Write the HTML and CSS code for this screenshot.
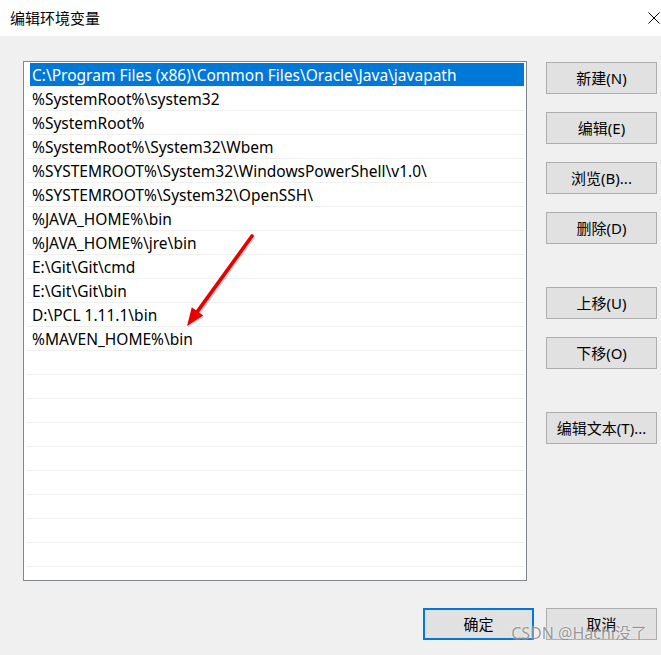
FILE: index.html
```html
<!DOCTYPE html>
<html lang="zh-CN">
<head>
  <meta charset="UTF-8" />
  <title>编辑环境变量</title>
  <link rel="stylesheet" href="styles.css">
</head>
<body>

  <div class="titlebar">
    <span class="title">编辑环境变量</span>
    <svg class="close" width="12" height="12" viewBox="0 0 12 12">
      <path d="M0.5 0.5 L11.5 11.5 M11.5 0.5 L0.5 11.5" stroke="#000" stroke-width="1" fill="none"/>
    </svg>
  </div>

  <div class="dialog">
    <div class="main">
      <div class="listbox">
        <div class="row sel"><span class="cell">C:\Program Files (x86)\Common Files\Oracle\Java\javapath</span></div>
        <div class="row"><span class="cell">%SystemRoot%\system32</span></div>
        <div class="row"><span class="cell">%SystemRoot%</span></div>
        <div class="row"><span class="cell">%SystemRoot%\System32\Wbem</span></div>
        <div class="row"><span class="cell">%SYSTEMROOT%\System32\WindowsPowerShell\v1.0\</span></div>
        <div class="row"><span class="cell">%SYSTEMROOT%\System32\OpenSSH\</span></div>
        <div class="row"><span class="cell">%JAVA_HOME%\bin</span></div>
        <div class="row"><span class="cell">%JAVA_HOME%\jre\bin</span></div>
        <div class="row"><span class="cell">E:\Git\Git\cmd</span></div>
        <div class="row"><span class="cell">E:\Git\Git\bin</span></div>
        <div class="row"><span class="cell">D:\PCL 1.11.1\bin</span></div>
        <div class="row"><span class="cell">%MAVEN_HOME%\bin</span></div>
        <div class="row"></div>
        <div class="row"></div>
        <div class="row"></div>
        <div class="row"></div>
        <div class="row"></div>
        <div class="row"></div>
        <div class="row"></div>
        <div class="row"></div>
        <div class="row"></div>
        <div class="row"></div>

        <!-- annotation arrow drawn over the list -->
        <svg class="arrow" width="502" height="518" viewBox="0 0 502 518">
          <line x1="229" y1="176" x2="175" y2="251" stroke="rgba(0,0,0,0.18)" stroke-width="4" stroke-linecap="round"/>
          <polygon points="164,266 180,255.5 169,247.3" fill="rgba(0,0,0,0.18)"/>
          <line x1="228" y1="175" x2="173.5" y2="250.4" stroke="#e60000" stroke-width="3.6" stroke-linecap="round"/>
          <polygon points="163,265 179.2,254.5 167.8,246.3" fill="#e60000"/>
        </svg>
      </div>

      <div class="side">
        <button class="btn">新建(N)</button>
        <button class="btn">编辑(E)</button>
        <button class="btn">浏览(B)...</button>
        <button class="btn">删除(D)</button>
        <button class="btn group">上移(U)</button>
        <button class="btn">下移(O)</button>
        <button class="btn group">编辑文本(T)...</button>
      </div>
    </div>

    <div class="footer">
      <button class="btn default">确定</button>
      <button class="btn">取消</button>
      <span class="watermark">CSDN @Hachi没了</span>
    </div>
  </div>

</body>
</html>
```

FILE: styles.css
```css
body {
  margin: 0;
  background-color: #f0f0f0;
  font-family: "Noto Sans", "Noto Sans CJK SC", sans-serif;
  font-size: 15px;
  color: #000;
}

.titlebar {
  height: 36px;
  background-color: #ffffff;
  display: flex;
  align-items: center;
  justify-content: space-between;
  padding: 0 1px 0 10px;
}
.title {
  font-size: 15px;
  margin-top: -1px;
}
.close {
  margin-top: -1px;
}

.dialog {
  padding: 25px 4px 0 23px;
}
.main {
  display: flex;
  gap: 19px;
}

.listbox {
  position: relative;
  width: 502px;
  height: 517px;
  border: 1px solid #82878f;
  background-color: #ffffff;
  overflow: hidden;
  padding: 1px 1px 0 1px;
}
.row {
  height: 24px;
  border-bottom: 1px solid #f0f0f0;
  box-sizing: border-box;
  margin: 0 1px 0 1px;
  display: flex;
}
.cell {
  flex: 1;
  font-size: 15.5px;
  line-height: 25px;
  padding-left: 2px;
  margin-left: 4px;
  white-space: nowrap;
}
.row.sel .cell {
  background-color: #0078d7;
  color: #ffffff;
}

.arrow {
  position: absolute;
  left: 0;
  top: -1px;
}

.side {
  display: flex;
  flex-direction: column;
  gap: 18px;
  padding-top: 1px;
}
.side .group {
  margin-top: 25px;
}

.btn {
  width: 111px;
  height: 32px;
  background-color: #e1e1e1;
  border: 1px solid #adadad;
  font-family: "Noto Sans", "Noto Sans CJK SC", sans-serif;
  font-size: 15px;
  color: #000;
  padding: 0 0 2px 0;
}
.btn.default {
  border: 2px solid #0078d7;
}

.footer {
  position: relative;
  display: flex;
  justify-content: flex-end;
  gap: 12px;
  margin-top: 27px;
}
.watermark {
  position: absolute;
  right: 10px;
  top: 12px;
  font-size: 16px;
  color: rgba(120, 120, 120, 0.75);
  text-shadow: 0 0 2px #fff;
  pointer-events: none;
}
```
